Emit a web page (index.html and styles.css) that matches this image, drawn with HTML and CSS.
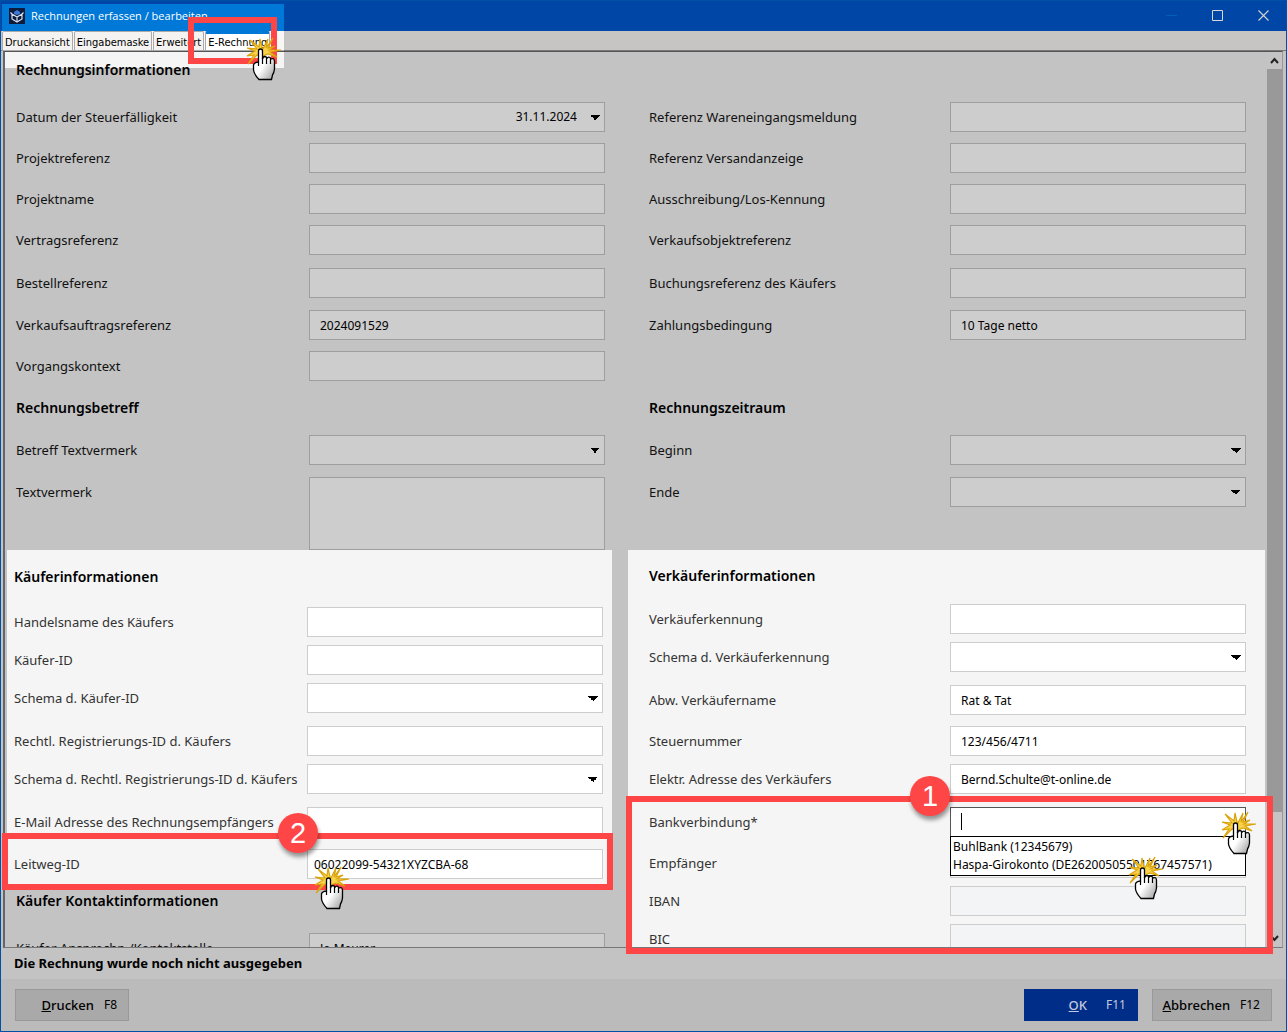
FILE: index.html
```html
<!DOCTYPE html>
<html lang="de">
<head>
<meta charset="utf-8">
<title>Rechnungen erfassen / bearbeiten</title>
<link rel="stylesheet" href="styles.css">
</head>
<body>
<svg class="defs" aria-hidden="true">
  <defs>
    <linearGradient id="skin" x1="0" y1="0" x2="1" y2="1"><stop offset="0.5" stop-color="#fff"/><stop offset="1" stop-color="#999"/></linearGradient>
    <symbol id="click" viewBox="0 0 36 44">
      <path d="M17 12 L22 2 L20 11 L27 1 L22 11 L29 9 L23 13 L35 13 L24 15 L31 20 L22 17 L17 19 L11 18 L2 27 L8 18 L1 19 L9 14 L1 11 L11 12 L4 3 L13 10 L14 2 L16 11 Z" fill="#f8d24a" stroke="#dba30a" stroke-width="1.2"/>
      <path d="M12.500 14 Q12.500 12 14.500 12 Q16.500 12 16.500 14 V22 Q17 19.500 19 19.500 Q21 20 21 21.500 Q22 19.500 24 20.500 L25 22 Q28 20.500 28.500 24 V32 Q28 36 26.500 38 L25.500 42.500 H13 Q8 37 7.500 33 V28 Q8 25.500 12.500 25 Z" fill="url(#skin)" stroke="#000" stroke-width="1.300"/>
      <path d="M12.500 25 V29 M16.500 21 V27 M20.500 21 V27 M24.500 21 V27" fill="none" stroke="#000" stroke-width="1.200"/>
    </symbol>
  </defs>
</svg>
<div class="window">
  <header class="titlebar">
    <h1 class="title">
      <svg class="logo" viewBox="0 0 16 16" aria-hidden="true"><rect width="16" height="16" fill="#0d1c3d"/><path d="M5 4l3-2 3 2v2L8 7 5 6z" fill="#3a78d8"/><path d="M3 6v5l5 3 5-3V6L8 9zM1.500 4.500L3 6M14.500 4.500L13 6M8 9v4" fill="none" stroke="#d8e2f2" stroke-width="1.200"/></svg>
      Rechnungen erfassen / bearbeiten
    </h1>
    <div class="window-controls">
      <button type="button" class="wc" aria-label="Minimieren"><svg viewBox="0 0 11 11"><path d="M0 5.500h11" stroke="#0060b8"/></svg></button>
      <button type="button" class="wc" aria-label="Maximieren"><svg viewBox="0 0 11 11"><path d="M.5 .5h10v10H.5z" fill="none" stroke="#d8d8d8"/></svg></button>
      <button type="button" class="wc" aria-label="Schließen"><svg viewBox="0 0 11 11"><path d="M.5 .5l10 10M10.500 .5l-10 10" stroke="#d0d0d0" stroke-width="1.200"/></svg></button>
    </div>
  </header>
  <nav class="tabbar">
    <div class="tabs">
      <button type="button" class="tab">Druckansicht</button>
      <button type="button" class="tab">Eingabemaske</button>
      <button type="button" class="tab">Erweitert</button>
      <button type="button" class="tab tab-active">E-Rechnung</button>
    </div>
  </nav>
  <main class="workspace">
    <form class="form" id="f">
      <div class="tab-glow"></div>
      <section class="cell">
        <h2>Rechnungsinformationen</h2>
        <div class="row r41"><label for="a1">Datum der Steuerfälligkeit</label><select id="a1" class="date"><option>31.11.2024</option></select></div>
        <div class="row r41"><label for="a2">Projektreferenz</label><input id="a2"></div>
        <div class="row r41"><label for="a3">Projektname</label><input id="a3"></div>
        <div class="row r43"><label for="a4">Vertragsreferenz</label><input id="a4"></div>
        <div class="row r42"><label for="a5">Bestellreferenz</label><input id="a5"></div>
        <div class="row r41"><label for="a6">Verkaufsauftragsreferenz</label><input id="a6" value="2024091529"></div>
        <div class="row"><label for="a7">Vorgangskontext</label><input id="a7"></div>
      </section>
      <section class="cell cell-right no-head">
        <div class="row r41"><label for="b1">Referenz Wareneingangsmeldung</label><input id="b1"></div>
        <div class="row r41"><label for="b2">Referenz Versandanzeige</label><input id="b2"></div>
        <div class="row r41"><label for="b3">Ausschreibung/Los-Kennung</label><input id="b3"></div>
        <div class="row r43"><label for="b4">Verkaufsobjektreferenz</label><input id="b4"></div>
        <div class="row r42"><label for="b5">Buchungsreferenz des Käufers</label><input id="b5"></div>
        <div class="row"><label for="b6">Zahlungsbedingung</label><input id="b6" value="10 Tage netto"></div>
      </section>
      <section class="cell second">
        <h2>Rechnungsbetreff</h2>
        <div class="row r42"><label for="c1">Betreff Textvermerk</label><select id="c1"><option></option></select></div>
        <div class="row"><label for="c2">Textvermerk</label><textarea id="c2"></textarea></div>
      </section>
      <section class="cell cell-right second">
        <h2>Rechnungszeitraum</h2>
        <div class="row r42"><label for="d1">Beginn</label><select id="d1"><option></option></select></div>
        <div class="row"><label for="d2">Ende</label><select id="d2"><option></option></select></div>
      </section>
      <div class="stack">
        <section class="panel">
          <h2>Käuferinformationen</h2>
          <div class="row r38"><label for="e1">Handelsname des Käufers</label><input id="e1"></div>
          <div class="row r38"><label for="e2">Käufer-ID</label><input id="e2"></div>
          <div class="row r43"><label for="e3">Schema d. Käufer-ID</label><select id="e3"><option></option></select></div>
          <div class="row r38"><label for="e4">Rechtl. Registrierungs-ID d. Käufers</label><input id="e4"></div>
          <div class="row r43"><label for="e5">Schema d. Rechtl. Registrierungs-ID d. Käufers</label><select id="e5"><option></option></select></div>
          <div class="row r42"><label for="e6">E-Mail Adresse des Rechnungsempfängers</label><input id="e6"></div>
          <div class="row r38"><label for="e7">Leitweg-ID</label><input id="e7" class="tight" value="06022099-54321XYZCBA-68"></div>
        </section>
        <section class="cell contact">
          <h2>Käufer Kontaktinformationen</h2>
          <div class="row"><label for="g1">Käufer Ansprechp./Kontaktstelle</label><input id="g1" value="Jo Meurer"></div>
        </section>
      </div>
      <section class="panel panel-right">
        <h2>Verkäuferinformationen</h2>
        <div class="row r38"><label for="h1">Verkäuferkennung</label><input id="h1"></div>
        <div class="row r43"><label for="h2">Schema d. Verkäuferkennung</label><select id="h2"><option></option></select></div>
        <div class="row r41"><label for="h3">Abw. Verkäufername</label><input id="h3" value="Rat &amp; Tat"></div>
        <div class="row r38"><label for="h4">Steuernummer</label><input id="h4" value="123/456/4711"></div>
        <div class="row r43"><label for="h5">Elektr. Adresse des Verkäufers</label><input id="h5" value="Bernd.Schulte@t-online.de"></div>
        <div class="row r41"><label for="h6">Bankverbindung*</label>
          <div class="combo"><input id="h6" role="combobox" aria-expanded="true" aria-controls="banks"><span class="caret"></span>
            <ul class="listbox" id="banks" role="listbox"><li role="option">BuhlBank (12345679)</li><li role="option">Haspa-Girokonto (DE26200505501767457571)</li></ul>
          </div>
        </div>
        <div class="row r38"><label for="h7">Empfänger</label><input id="h7" class="locked" readonly></div>
        <div class="row r38"><label for="h8">IBAN</label><input id="h8" class="locked" readonly></div>
        <div class="row r38"><label for="h9">BIC</label><input id="h9" class="locked" readonly></div>
      </section>
    </form>
    <div class="scrollbar" aria-hidden="true">
      <svg class="arrow" viewBox="0 0 15 17"><path d="M4 11l3.500-4 3.500 4" fill="none" stroke="#222" stroke-width="2"/></svg>
      <div class="thumb"></div>
      <svg class="arrow" viewBox="0 0 15 17"><path d="M4 6l3.500 4 3.500-4" fill="none" stroke="#222" stroke-width="2"/></svg>
    </div>
  </main>
  <p class="status">Die Rechnung wurde noch nicht ausgegeben</p>
  <footer class="actions">
    <button type="button" class="btn print"><span><u>D</u>rucken</span><kbd>F8</kbd></button>
    <button type="submit" form="f" class="btn ok"><span><u>O</u>K</span><kbd>F11</kbd></button>
    <button type="button" class="btn cancel"><span><u>A</u>bbrechen</span><kbd>F12</kbd></button>
  </footer>
  <div class="frame frame-tab"></div>
  <div class="frame frame-bank"></div>
  <div class="frame frame-route"></div>
  <span class="badge badge-1">1</span>
  <span class="badge badge-2">2</span>
  <svg class="click click-tab"><use href="#click"/></svg>
  <svg class="click click-open"><use href="#click"/></svg>
  <svg class="click click-pick"><use href="#click"/></svg>
  <svg class="click click-route"><use href="#click"/></svg>
</div>
</body>
</html>
```
FILE: styles.css
```css
* { box-sizing: border-box; }
body { margin: 0; font: 400 13px/18px "Noto Sans", "Open Sans", sans-serif; color: #000; }
h1, h2, p, ul { margin: 0; padding: 0; }
button, input, select, textarea { font: inherit; color: inherit; border-radius: 0; margin: 0; }
.defs { position: absolute; width: 0; height: 0; }

.window { position: relative; display: flex; flex-direction: column; height: 100vh; overflow: hidden; border: 1px solid #0050a8; background: #c3c3c3; }

.titlebar { display: flex; justify-content: space-between; height: 30px; flex: none; background: #0046a6; padding: 3px 0 0 1px; }
.title { display: flex; align-items: center; gap: 6px; width: 282px; padding: 0 0 3px 7px; background: #0078d7; color: #fff; font: 400 11px/18px "Open Sans", sans-serif; }
.logo { width: 16px; height: 16px; }
.window-controls { display: flex; }
.wc { width: 46px; padding: 0 0 5px; border: 0; background: none; display: grid; place-items: center; }
.wc svg { width: 11px; height: 11px; }

.tabbar { flex: none; height: 20px; background: #c6c5c3; border-bottom: 1px solid #777; padding-left: 1px; }
.tabs { display: flex; gap: 1px; width: 282px; height: 20px; background: #f8f7f5; border-bottom: 1px solid #aaa; }
.tab { height: 19px; padding: 3px 2px 0; border: 1px solid #aaa; border-radius: 2px 2px 0 0; border-bottom: 0; background: #f4f3f1; font: 11px/16px "DejaVu Sans Condensed", "DejaVu Sans", sans-serif; white-space: nowrap; }
.tab-active { border-top: 3px solid #0078d7; padding-top: 1px; background: #fff; }

.workspace { flex: 1; min-height: 0; display: flex; margin: 0 3px 0 2px; border: 1px solid #555; border-bottom-color: #777; border-right-color: #999; border-left: 2px solid #666; }
.form { position: relative; flex: 1; overflow: hidden; display: grid; grid-template-columns: minmax(0, 605fr) minmax(0, 637fr); column-gap: 16px; align-content: start; padding: 0 2px 0 2px; background: #c3c3c3; }
.tab-glow { position: absolute; left: 0; top: 0; width: 279px; height: 16px; background: #f5f5f5; }
.cell { position: relative; padding: 8px 7px 0 9px; }
.cell-right { padding-left: 21px; padding-right: 19px; }
.no-head { padding-top: 50px; }
h2 { font: 600 14px/20px "Noto Sans", sans-serif; margin-bottom: 22px; }
.second { padding-top: 17px; }
.second h2 { margin-bottom: 17px; }
.row { display: grid; grid-template-columns: 293px minmax(0, 1fr); align-items: start; color: #111; }
.cell-right .row, .panel-right .row { grid-template-columns: 301px minmax(0, 1fr); }
.row label { line-height: 30px; white-space: nowrap; }
.r38 { height: 38px; }
.r41 { height: 41px; }
.r42 { height: 42px; }
.r43 { height: 43px; }
.row input, .row select, .row textarea { width: 100%; height: 30px; padding: 0 10px; border: 1px solid #9e9e9e; background-color: #cdcdcd; color: #000; font-size: 12px; outline: 0; display: block; }
.row textarea { height: 73px; resize: none; }
.row select { appearance: none; background-image: linear-gradient(to bottom right, #000 50%, transparent 50%), linear-gradient(to bottom left, #000 50%, transparent 50%); background-size: 5px 5px; background-repeat: no-repeat; background-position: right 4px center, right 9px center; }
.row .date { text-align-last: right; padding-right: 27px; }
.panel { background: #f5f5f5; padding: 17px 9px 0 7px; }
.panel-right { padding: 16px 19px 0 21px; }
.panel h2 { margin-bottom: 20px; }
.panel-right h2 { margin-bottom: 18px; }
.panel .row { color: #333; }
.panel .row input, .panel .row select { border-color: #cdcdcd; background-color: #fff; }
.panel .row .tight { padding-left: 6px; }
.panel .row .locked { background-color: #f3f4f6; }
.contact { padding-top: 4px; }
.combo { position: relative; }
.panel .combo input { border-color: #555; }
.caret { position: absolute; left: 11px; top: 6px; width: 1px; height: 17px; background: #000; }
.listbox { position: absolute; z-index: 1; left: 0; right: 0; top: 29px; list-style: none; border: 1px solid #000; background: #fff; color: #000; padding: 1px 2px; font-size: 12px; white-space: nowrap; }

.scrollbar { width: 15px; flex: none; display: flex; flex-direction: column; background: #c4c4c4; }
.arrow { width: 15px; height: 17px; flex: none; }
.thumb { height: 83%; background: #999; margin-bottom: auto; }

.status { flex: none; height: 31px; padding-left: 13px; font: 700 13px/31px "Noto Sans", sans-serif; }
.actions { flex: none; display: flex; gap: 14px; height: 52px; padding: 10px 14px; background: #bbb; }
.btn { display: flex; align-items: center; justify-content: flex-end; gap: 10px; width: 114px; padding: 0 11px; border: 1px solid #999; background: #a9a9a9; font-weight: 500; }
.btn kbd { font: 400 12px/18px "Noto Sans", sans-serif; }
.print { margin-right: auto; }
.ok { background: #002d88; border-color: #002d88; color: #c3c9dc; gap: 19px; }
.cancel { width: 120px; }

.frame { position: absolute; z-index: 2; border: 6px solid #ff4646; }
.frame-tab { left: 187px; top: 16px; width: 89px; height: 47px; }
.frame-bank { left: 625px; right: 13px; top: 795px; height: 158px; }
.frame-route { left: 1px; top: 832px; width: 611px; height: 57px; }
.badge { position: absolute; z-index: 3; width: 40px; height: 40px; border-radius: 50%; background: #ff4646; color: #fff; font: 29px/40px "Liberation Sans", sans-serif; text-align: center; box-shadow: 1px 4px 4px rgba(0, 0, 0, 0.4); }
.badge-1 { left: 909px; top: 775px; }
.badge-2 { left: 277px; top: 812px; }
.click { position: absolute; z-index: 4; width: 36px; height: 44px; }
.click-tab { left: 245px; top: 36px; }
.click-open { left: 1220px; top: 810px; }
.click-pick { left: 1127px; top: 855px; }
.click-route { left: 313px; top: 865px; }
```
